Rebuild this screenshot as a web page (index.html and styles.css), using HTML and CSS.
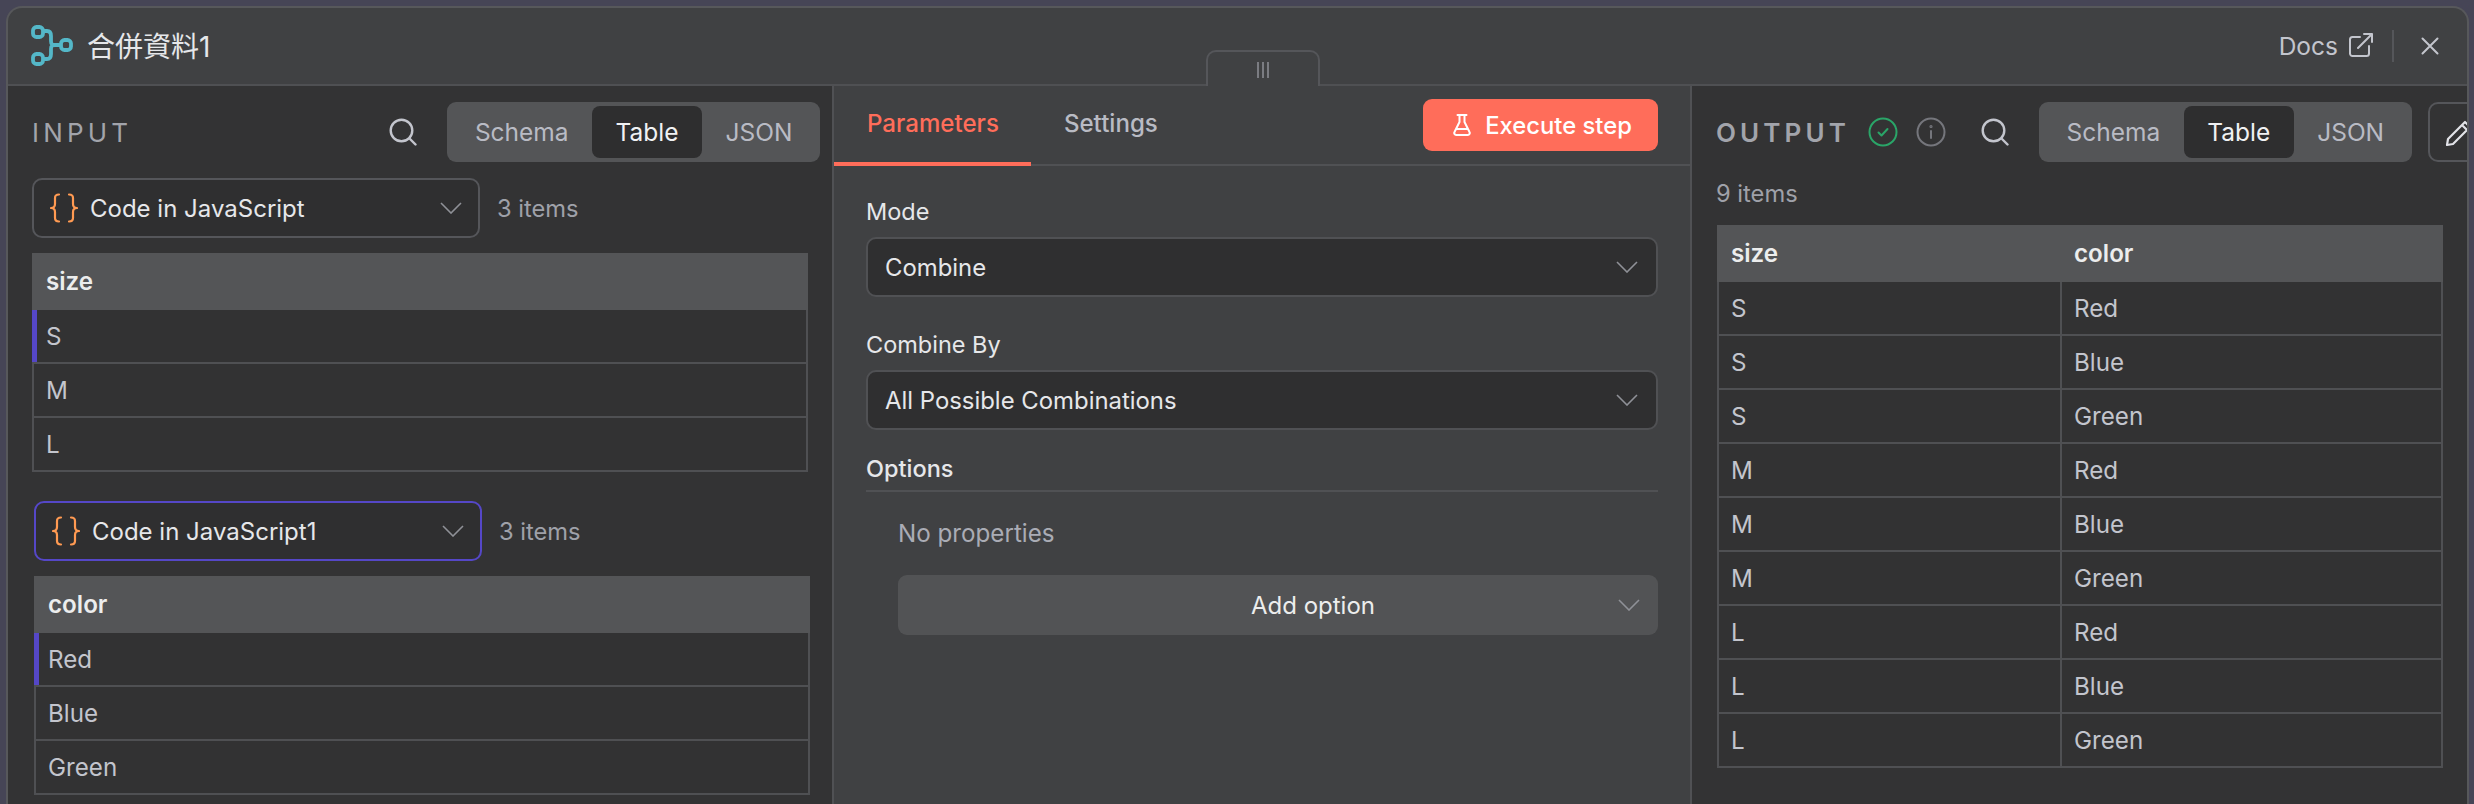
FILE: index.html
```html
<!DOCTYPE html>
<html lang="zh-Hant">
<head>
<meta charset="utf-8">
<title>合併資料1</title>
<link rel="stylesheet" href="styles.css">
</head>
<body>
<div class="modal">
  <header class="top">
    <svg class="logo" viewBox="0 0 44 44" fill="none" stroke="#54b7c8" stroke-width="3.800">
      <rect x="3" y="3" width="10" height="10" rx="3.500"/>
      <rect x="3" y="30" width="10" height="10" rx="3.500"/>
      <rect x="31" y="16" width="10" height="10" rx="3.500"/>
      <path d="M13 7h4c3 0 4 2 4 5v5c0 3 1 4 4 4h6M25 21c-3 0-4 1-4 4v5c0 3-1 5-4 5h-4"/>
    </svg>
    <h1 class="title">合併資料1</h1>
    <a class="docs">Docs
      <svg class="docs-icon" viewBox="0 0 24 24" fill="none" stroke="#c3c5cd" stroke-width="2" stroke-linecap="round" stroke-linejoin="round">
        <path d="M11 4H3.500A2.500 2.500 0 0 0 1 6.500v14A2.500 2.500 0 0 0 3.500 23h14a2.500 2.500 0 0 0 2.500-2.500V13"/>
        <path d="M9 15 23 1M15 1h8v8"/>
      </svg>
    </a>
    <span class="divider"></span>
    <svg class="close" viewBox="0 0 18 18" fill="none" stroke="#c3c5cd" stroke-width="2" stroke-linecap="round"><path d="M1.500 1.500l15 15M16.500 1.500l-15 15"/></svg>
  </header>
  <div class="handle">
    <svg class="grip" viewBox="0 0 14 16" stroke="#8f9197" stroke-width="1.500"><path d="M2 0v16M7 0v16M12 0v16"/></svg>
  </div>
  <main class="panels">
    <section class="side input">
      <div class="side-head">
        <span class="side-title">INPUT</span>
        <svg class="search" viewBox="0 0 28 28" fill="none" stroke="#c3c5cd" stroke-width="2.400" stroke-linecap="round"><circle cx="12.500" cy="12.500" r="10.800"/><path d="M20.500 20.500l6 6"/></svg>
        <div class="seg"><span class="seg-tab">Schema</span><span class="seg-tab on">Table</span><span class="seg-tab">JSON</span></div>
      </div>
      <div class="run">
        <div class="run-row">
          <div class="picker">
            <svg class="braces" viewBox="0 0 28 30" fill="none" stroke="#ff9a52" stroke-width="2.200" stroke-linecap="round" stroke-linejoin="round"><path d="M9 1.500c-3 0-4 1-4 3.500v6c0 2.500-1.500 4-4 4 2.500 0 4 1.500 4 4v6c0 2.500 1 3.500 4 3.500M19 1.500c3 0 4 1 4 3.500v6c0 2.500 1.500 4 4 4-2.500 0-4 1.500-4 4v6c0 2.500-1 3.500-4 3.500"/></svg>
            <span class="picker-label">Code in JavaScript</span>
            <svg class="chev" viewBox="0 0 22 12" fill="none" stroke="#8f9197" stroke-width="1.600"><path d="M1 1l10 10L21 1"/></svg>
          </div>
          <span class="count">3 items</span>
        </div>
        <table class="grid">
          <thead><tr><th>size</th></tr></thead>
          <tbody>
            <tr class="hl"><td>S</td></tr>
            <tr><td>M</td></tr>
            <tr><td>L</td></tr>
          </tbody>
        </table>
      </div>
      <div class="run second">
        <div class="run-row">
          <div class="picker active">
            <svg class="braces" viewBox="0 0 28 30" fill="none" stroke="#ff9a52" stroke-width="2.200" stroke-linecap="round" stroke-linejoin="round"><path d="M9 1.500c-3 0-4 1-4 3.500v6c0 2.500-1.500 4-4 4 2.500 0 4 1.500 4 4v6c0 2.500 1 3.500 4 3.500M19 1.500c3 0 4 1 4 3.500v6c0 2.500 1.500 4 4 4-2.500 0-4 1.500-4 4v6c0 2.500-1 3.500-4 3.500"/></svg>
            <span class="picker-label">Code in JavaScript1</span>
            <svg class="chev" viewBox="0 0 22 12" fill="none" stroke="#8f9197" stroke-width="1.600"><path d="M1 1l10 10L21 1"/></svg>
          </div>
          <span class="count">3 items</span>
        </div>
        <table class="grid">
          <thead><tr><th>color</th></tr></thead>
          <tbody>
            <tr class="hl"><td>Red</td></tr>
            <tr><td>Blue</td></tr>
            <tr><td>Green</td></tr>
          </tbody>
        </table>
      </div>
    </section>

    <section class="center">
      <div class="tabs">
        <span class="tab on">Parameters</span>
        <span class="tab">Settings</span>
        <button class="exec">
          <svg class="flask" viewBox="0 0 18 22" fill="none" stroke="#fff" stroke-width="2" stroke-linejoin="round" stroke-linecap="round"><path d="M4.500 1h9M6.500 1v7L1.500 18a2 2 0 0 0 1.800 3h11.400a2 2 0 0 0 1.800-3L11.500 8V1M4 15h10"/></svg>
          Execute step
        </button>
      </div>
      <div class="form">
        <label class="field-label">Mode</label>
        <div class="select">Combine<svg class="chev" viewBox="0 0 22 12" fill="none" stroke="#8f9197" stroke-width="1.600"><path d="M1 1l10 10L21 1"/></svg></div>
        <label class="field-label by">Combine By</label>
        <div class="select">All Possible Combinations<svg class="chev" viewBox="0 0 22 12" fill="none" stroke="#8f9197" stroke-width="1.600"><path d="M1 1l10 10L21 1"/></svg></div>
        <div class="options-head">Options</div>
        <div class="options-body">
          <div class="empty">No properties</div>
          <div class="add"><span class="add-label">Add option</span><svg class="chev" viewBox="0 0 22 12" fill="none" stroke="#8f9197" stroke-width="1.600"><path d="M1 1l10 10L21 1"/></svg></div>
        </div>
      </div>
    </section>

    <section class="side output">
      <div class="side-head">
        <span class="side-title strong">OUTPUT</span>
        <svg class="status ok" viewBox="0 0 30 30" fill="none" stroke="#2aa568" stroke-width="2" stroke-linecap="round" stroke-linejoin="round"><circle cx="15" cy="15" r="13.500"/><path d="M10.500 15.500l3 3 6-6.500"/></svg>
        <svg class="status info" viewBox="0 0 30 30" fill="none" stroke="#75767c" stroke-width="2" stroke-linecap="round"><circle cx="15" cy="15" r="13.500"/><path d="M15 14v7"/><circle cx="15" cy="9.500" r=".6"/></svg>
        <svg class="search" viewBox="0 0 28 28" fill="none" stroke="#c3c5cd" stroke-width="2.400" stroke-linecap="round"><circle cx="12.500" cy="12.500" r="10.800"/><path d="M20.500 20.500l6 6"/></svg>
        <div class="seg"><span class="seg-tab">Schema</span><span class="seg-tab on">Table</span><span class="seg-tab">JSON</span></div>
        <div class="edit">
          <svg class="pencil" viewBox="0 0 28 28" fill="none" stroke="#e2e3e8" stroke-width="2.200" stroke-linejoin="round"><path d="M20 3l5 5L8 25l-6 1 1-6zM17 6l5 5"/></svg>
        </div>
      </div>
      <div class="count out-count">9 items</div>
      <table class="grid two">
        <thead><tr><th>size</th><th>color</th></tr></thead>
        <tbody>
          <tr><td>S</td><td>Red</td></tr>
          <tr><td>S</td><td>Blue</td></tr>
          <tr><td>S</td><td>Green</td></tr>
          <tr><td>M</td><td>Red</td></tr>
          <tr><td>M</td><td>Blue</td></tr>
          <tr><td>M</td><td>Green</td></tr>
          <tr><td>L</td><td>Red</td></tr>
          <tr><td>L</td><td>Blue</td></tr>
          <tr><td>L</td><td>Green</td></tr>
        </tbody>
      </table>
    </section>
  </main>
</div>
</body>
</html>
```
FILE: styles.css
```css
* { box-sizing: border-box; }
html, body { margin: 0; height: 100%; overflow: hidden; }
body {
  background: #464556;
  font-family: Inter, "Noto Sans CJK TC", sans-serif;
  font-size: 24px;
  color: #c8cad2;
  padding: 6px 5px 0 6px;
}
.modal {
  position: relative;
  height: 100%;
  background: #404143;
  border: 2px solid #57585b;
  border-bottom: 0;
  border-radius: 16px 16px 0 0;
  display: flex;
  flex-direction: column;
  overflow: hidden;
}
.top {
  flex: none;
  height: 78px;
  display: flex;
  align-items: center;
  padding: 0 28px 0 22px;
  border-bottom: 2px solid #4f5053;
}
.logo { width: 44px; height: 44px; margin-right: 13px; }
.title { margin: -2px 0 0; flex: 1; font-size: 28px; font-weight: 400; color: #e6e7ea; }
.docs { display: flex; align-items: center; gap: 11px; color: #c3c5cd; font-size: 24.500px; }
.docs-icon { width: 24px; height: 24px; margin-top: -2px; }
.divider { width: 2px; height: 32px; background: #55565a; margin: 0 27px 0 19px; }
.close { width: 18px; height: 18px; }

.handle {
  position: absolute;
  left: 1198px;
  top: 42px;
  width: 114px;
  height: 36px;
  background: #404143;
  border: 2px solid #55565a;
  border-bottom: 0;
  border-radius: 10px 10px 0 0;
  display: flex;
  align-items: center;
  justify-content: center;
}
.grip { width: 14px; height: 16px; margin-top: 2px; }

.panels {
  flex: 1;
  min-height: 0;
  display: grid;
  grid-template-columns: 824px 860px 1fr;
}
.side { background: #333334; padding: 16px 0 0 24px; overflow: hidden; }
.side-head { display: flex; align-items: center; height: 60px; }
.side-title { font-size: 26px; letter-spacing: 4.200px; color: #a2a4ab; flex: 1; }
.side-title.strong { flex: none; font-weight: 600; letter-spacing: 4.100px; }
.input .search { margin-right: 30px; }
.search { flex: none; width: 28px; height: 28px; }
.seg {
  flex: none;
  display: flex;
  padding: 4px;
  height: 60px;
  background: #545557;
  border-radius: 9px;
  font-size: 24.500px;
}
.seg-tab {
  display: flex;
  align-items: center;
  padding: 0 23.500px;
  border-radius: 8px;
  color: #b9bbc4;
}
.seg-tab.on { background: #2e2e2f; color: #f0f1f3; }
.input .seg { margin-right: 12px; }

.output .status { flex: none; width: 30px; height: 30px; }
.status.ok { margin-left: 18px; }
.status.info { margin-left: 18px; }
.output .search { margin: 0 30px 0 35px; }
.edit {
  flex: none;
  width: 64px;
  height: 60px;
  margin-left: 16px;
  border: 2px solid #55565a;
  border-radius: 10px;
  padding: 15px 0 0 15px;
}
.pencil { display: block; width: 28px; height: 28px; }

.run-row { display: flex; align-items: center; gap: 17px; margin-top: 16px; }
.picker {
  width: 448px;
  height: 60px;
  display: flex;
  align-items: center;
  padding: 0 16px;
  background: #2f2f30;
  border: 2px solid #55565a;
  border-radius: 10px;
}
.picker.active { border-color: #5547c7; }
.braces { flex: none; width: 28px; height: 30px; margin-right: 12px; }
.picker-label { flex: 1; color: #e6e7ea; font-size: 24px; }
.chev { flex: none; width: 22px; height: 12px; }
.count { color: #9fa1a9; font-size: 23.700px; }
.second { margin: 29px 0 0 2px; }

.grid {
  border-collapse: collapse;
  table-layout: fixed;
  width: 776px;
  margin: 15px 0 0;
}
.grid th, .grid td {
  height: 54px;
  padding: 0 12px;
  border: 2px solid #4f5053;
  text-align: left;
  font-weight: 400;
  font-size: 24.200px;
}
.grid th {
  height: 55px;
  background: #545557;
  border-color: #545557;
  font-weight: 600;
  color: #eceded;
}
.grid td { background: #323233; color: #c3c5cd; }
.grid .hl td { border-left-color: #5547c7; box-shadow: inset 3px 0 0 #5547c7; }
.grid.two { width: 726px; margin: 16px 0 0 1px; }
.grid.two th:first-child { width: 343px; }

.center {
  border-left: 2px solid #505154;
  border-right: 2px solid #505154;
  min-width: 0;
}
.tabs {
  height: 80px;
  display: flex;
  align-items: stretch;
  border-bottom: 2px solid #505154;
  padding-right: 32px;
}
.tab {
  display: flex;
  align-items: center;
  padding: 0 32px 6px 33px;
  font-weight: 500;
  color: #b9bbc4;
  margin-bottom: -2px;
  font-size: 24.100px;
}
.tab.on { color: #ff6d5a; border-bottom: 4px solid #ff6d5a; padding-bottom: 2px; }
.exec {
  margin: 13px 0 13px auto;
  height: 52px;
  width: 235px;
  border: 0;
  padding: 0 0 0 4px;
  border-radius: 9px;
  background: #ff6d5a;
  color: #fff;
  font: inherit;
  font-size: 23.800px;
  font-weight: 500;
  display: flex;
  align-items: center;
  justify-content: center;
  gap: 14px;
}
.flask { width: 18px; height: 22px; }
.form { padding: 31px 32px 0 32px; }
.field-label { display: block; height: 30px; line-height: 30px; color: #e6e7ea; font-size: 23.500px; }
.field-label.by { margin-top: 33px; }
.select {
  margin-top: 10px;
  height: 60px;
  display: flex;
  align-items: center;
  justify-content: space-between;
  padding: 0 18px 0 17px;
  background: #2f2f30;
  border: 2px solid #505154;
  border-radius: 10px;
  color: #e6e7ea;
  font-size: 23.900px;
}
.options-head {
  margin-top: 24px;
  height: 38px;
  line-height: 30px;
  border-bottom: 2px solid #505154;
  font-weight: 500;
  color: #e6e7ea;
  font-size: 23.500px;
}
.options-body { padding-left: 32px; }
.empty { margin-top: 27px; line-height: 30px; color: #aaacb5; font-size: 24.200px; }
.add {
  margin-top: 26px;
  height: 60px;
  display: flex;
  align-items: center;
  padding: 0 18px 0 110px;
  background: #525355;
  border-radius: 9px;
  color: #eceded;
}
.add-label { flex: 1; text-align: center; }

.out-count { margin-top: 17px; line-height: 30px; }
```
